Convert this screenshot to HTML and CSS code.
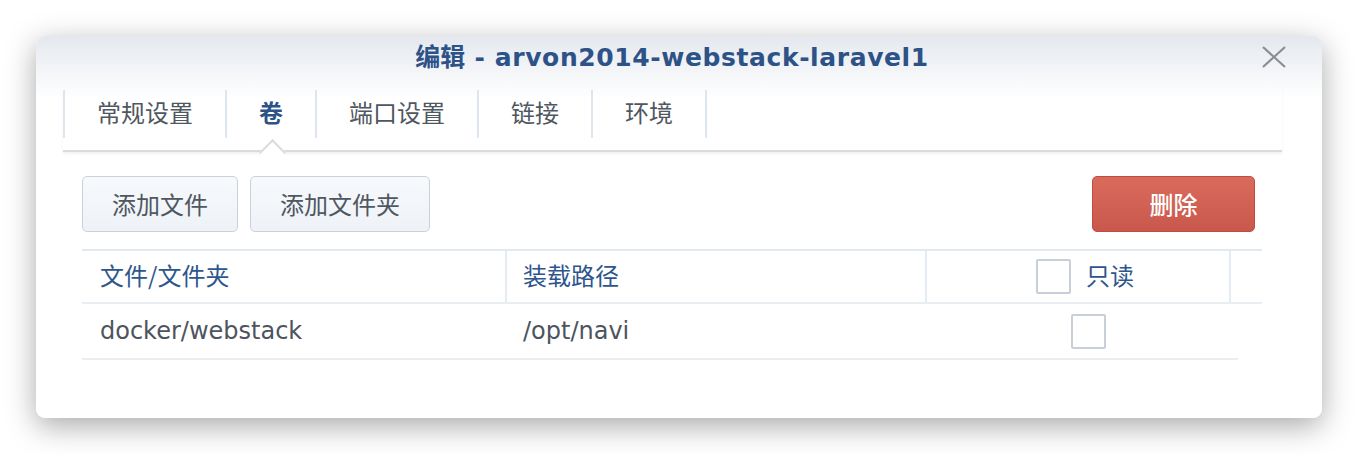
FILE: index.html
```html
<!DOCTYPE html>
<html lang="zh-CN">
<head>
<meta charset="utf-8">
<title>编辑</title>
<link rel="stylesheet" href="styles.css">
</head>
<body>
<div class="dialog">
  <div class="header">
    <div class="title"><span class="cjk">编辑</span> - arvon2014-webstack-laravel1</div>
    <button class="close" aria-label="关闭">
      <svg width="24" height="22" viewBox="0 0 24 22"><path d="M1 1 L23 21 M23 1 L1 21" stroke="#8b8d90" stroke-width="2.2" fill="none"/></svg>
    </button>
  </div>
  <div class="tabs">
    <div class="tab">常规设置</div>
    <div class="tab active">卷</div>
    <div class="tab">端口设置</div>
    <div class="tab">链接</div>
    <div class="tab last">环境</div>
  </div>
  <div class="toolbar">
    <button class="btn">添加文件</button>
    <button class="btn">添加文件夹</button>
    <div class="spacer"></div>
    <button class="btn danger">删除</button>
  </div>
  <div class="table">
    <div class="thead">
      <div class="th">文件/文件夹</div>
      <div class="th sep">装载路径</div>
      <div class="th sep center"><span class="checkbox"></span><span class="label">只读</span></div>
      <div class="th sep"></div>
    </div>
    <div class="row">
      <div class="td">docker/webstack</div>
      <div class="td">/opt/navi</div>
      <div class="td center"><span class="checkbox"></span></div>
    </div>
  </div>
</div>
</body>
</html>
```

FILE: styles.css
```css
* { box-sizing: border-box; }
html, body { height: 100%; }
body {
  margin: 0;
  padding: 36px 0 0 36px;
  background: #ffffff;
  font-family: "DejaVu Sans", "Noto Sans CJK SC", sans-serif;
  font-size: 24px;
  color: #4d545d;
}
.dialog {
  position: relative;
  width: 1286px;
  height: 382px;
  border-radius: 9px;
  background: linear-gradient(#e4e8ee 0px, #ffffff 62px);
  box-shadow: 0 8px 30px rgba(0, 0, 0, 0.34);
}
.header {
  height: 54px;
  padding-top: 4px;
  display: flex;
  justify-content: center;
}
.title {
  line-height: 30px;
  font-size: 25px;
  font-weight: bold;
  color: #2d5287;
  letter-spacing: 0.6px;
  margin-left: -14px;
}
.title .cjk {
  font-family: "Noto Sans CJK SC", sans-serif;
  font-size: 25px;
  letter-spacing: 0;
}
.close {
  position: absolute;
  right: 36px;
  top: 10px;
  width: 24px;
  height: 22px;
  padding: 0;
  border: 0;
  background: none;
}
.close svg { display: block; }
.tabs {
  display: flex;
  height: 62px;
  margin: 0 40px 0 27px;
  padding-bottom: 12px;
  border-bottom: 2px solid #d8dce1;
  box-shadow: 0 2px 3px rgba(0, 0, 0, 0.06);
}
.tab {
  position: relative;
  height: 48px;
  padding: 0 32px 5px;
  border-left: 2px solid #dde5ee;
  display: flex;
  align-items: center;
  font-family: "Noto Sans CJK SC", sans-serif;
  color: #4f5761;
}
.tab.last { border-right: 2px solid #dde5ee; }
.tab.active {
  color: #2d5287;
  font-weight: bold;
}
.tab.active::after {
  content: "";
  position: absolute;
  left: calc(50% - 8.5px);
  top: 52.5px;
  width: 17px;
  height: 17px;
  background: #ffffff;
  border-top: 2px solid #d8dce1;
  border-left: 2px solid #d8dce1;
  transform: rotate(45deg);
  z-index: 2;
}
.toolbar {
  display: flex;
  gap: 12px;
  margin: 24px 67px 0 46px;
  height: 56px;
}
.spacer { flex: 1; }
.btn {
  height: 56px;
  padding: 0 29px 2px;
  border: 1px solid #c9d1db;
  border-radius: 5px;
  background: linear-gradient(#f7f9fc, #eef2f7);
  font-family: "Noto Sans CJK SC", sans-serif;
  font-size: 24px;
  color: #4f5761;
}
.btn.danger {
  width: 163px;
  border-color: #c24a3f;
  background: linear-gradient(#d96b5d, #c8584b);
  color: #ffffff;
  font-weight: 500;
}
.table {
  margin: 17px 0 0 46px;
  width: 1180px;
}
.thead {
  display: grid;
  grid-template-columns: 423px 420px 304px 33px;
  height: 55px;
  border-top: 2px solid #e3e9f0;
  border-bottom: 2px solid #e9eef3;
}
.th {
  display: flex;
  align-items: center;
  padding-left: 18px;
  padding-bottom: 4px;
  color: #2e568c;
  font-family: "Noto Sans CJK SC", sans-serif;
}
.th.sep { border-left: 2px solid #e4ebf3; padding-left: 16px; }
.th.center { justify-content: center; padding-left: 14px; gap: 15px; padding-bottom: 0; }
.th.center .label { margin-bottom: 4px; }
.row {
  display: grid;
  grid-template-columns: 423px 420px 313px;
  width: 1156px;
  height: 56px;
  border-bottom: 2px solid #e9eef3;
}
.td {
  display: flex;
  align-items: center;
  padding-left: 18px;
}
.td.center { justify-content: center; padding-left: 13px; }
.checkbox {
  display: inline-block;
  width: 35px;
  height: 35px;
  border: 2px solid #c8cfd8;
  border-radius: 2px;
  background: #ffffff;
}
.label { line-height: 1; }
```
